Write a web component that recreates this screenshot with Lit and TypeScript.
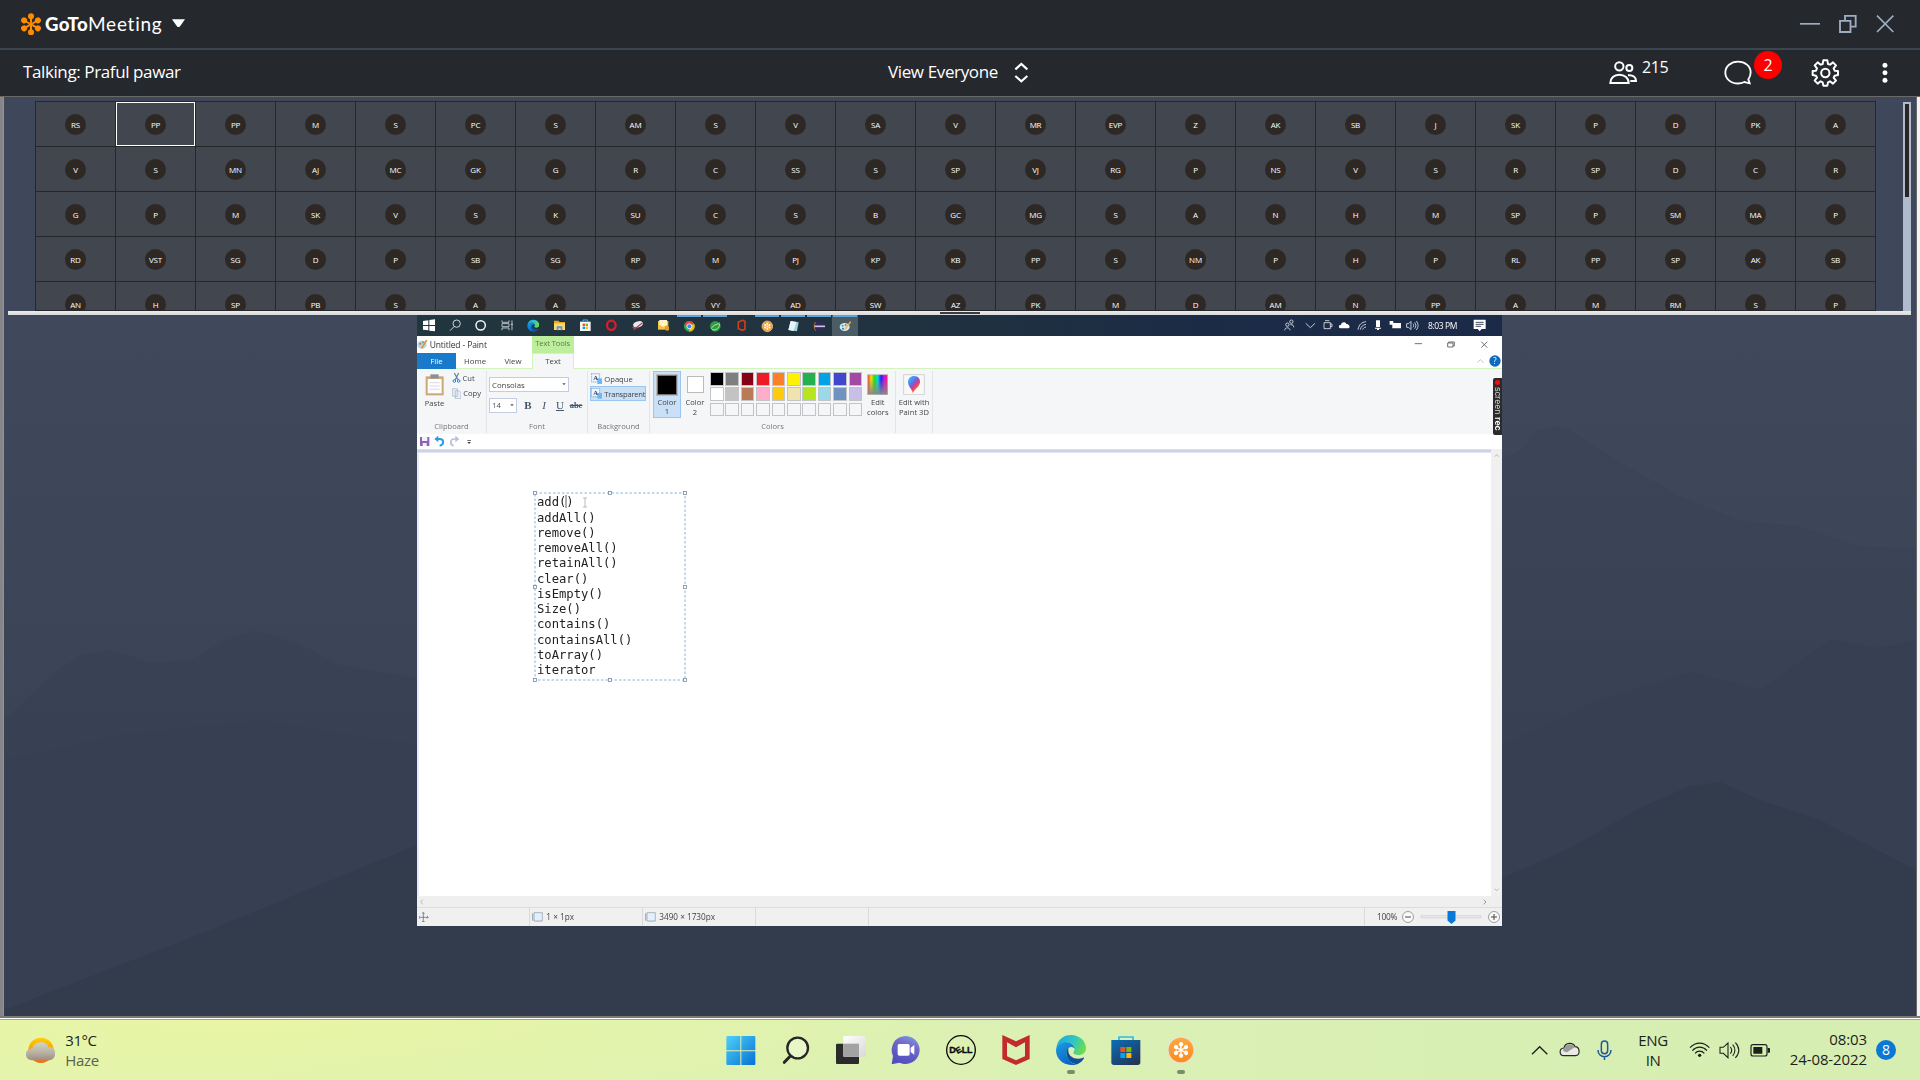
import { LitElement, html, svg, css } from 'lit';
import { customElement } from 'lit/decorators.js';

const ROWS = [
  'RS PP PP M S PC S AM S V SA V MR EVP Z AK SB J SK P D PK A',
  'V S MN AJ MC GK G R C SS S SP VJ RG P NS V S R SP D C R',
  'G P M SK V S K SU C S B GC MG S A N H M SP P SM MA P',
  'RD VST SG D P SB SG RP M PJ KP KB PP S NM P H P RL PP SP AK SB',
  'AN H SP PB S A A SS VY AD SW AZ PK M D AM N PP A M RM S P',
].map((r) => r.split(' '));

const LINES = ['add()', 'addAll()', 'remove()', 'removeAll()', 'retainAll()', 'clear()', 'isEmpty()', 'Size()', 'contains()', 'containsAll()', 'toArray()', 'iterator'];

const PALETTE = [
  '#000', '#7f7f7f', '#880015', '#ed1c24', '#ff7f27', '#fff200', '#22b14c', '#00a2e8', '#3f48cc', '#a349a4',
  '#fff', '#c3c3c3', '#b97a57', '#ffaec9', '#ffc90e', '#efe4b0', '#b5e61d', '#99d9ea', '#7092be', '#c8bfe7',
  ...Array(10).fill('#f5f6f7'),
];

// Every icon is authored on a grid of three units per pixel.
const ic = (x: number, y: number, w: number, h: number, body: unknown) =>
  html`<svg width=${w / 3} height=${h / 3} viewBox="${x} ${y} ${w} ${h}" fill="none">${body}</svg>`;

const star = (cx: number, cy: number, s: number, color: string) => svg`
  <g transform="translate(${cx} ${cy}) scale(${s})" fill=${color} stroke=${color}>
    ${[0, 60, 120, 180, 240, 300].map((a) => svg`<g transform="rotate(${a})"><path d="M0 -5V-20" stroke-width="6"/><circle cy="-24" r="9" stroke="none"/></g>`)}
    <circle r="6" stroke="none"/></g>`;

const edge = (id: string) => svg`
  <defs>
    <linearGradient id="${id}a" x1="0" y1=".2" x2="1" y2=".5"><stop offset="0" stop-color="#1fa7dd"/><stop offset=".55" stop-color="#2fc4c6"/><stop offset="1" stop-color="#6ade4b"/></linearGradient>
    <linearGradient id="${id}b" x1="0" y1="0" x2=".6" y2="1"><stop offset="0" stop-color="#1b9de2"/><stop offset="1" stop-color="#0a62c4"/></linearGradient>
  </defs>
  <path fill="url(#${id}a)" d="M1 40C4 14 22 0 45 0c27 0 45 20 45 39 0 14-10 21-22 21-11 0-16-4-16-7s4-5 4-11c0-11-10-19-22-19C16 23 4 32 1 40z"/>
  <path fill="url(#${id}b)" d="M0 46C1 31 15 22 31 22c14 0 24 9 25 20-3-5-8-6-12-6-8 2-14 11-13 22 2 16 16 30 32 31-6 2-12 2-18 1C20 90 0 70 0 46z"/>
  <path fill="#124f9a" d="M37 39c-5 5-7 11-6 19 2 17 17 30 33 30 9-4 16-11 20-18 1-2-1-3-3-2-19 8-44-1-44-21 0-3 0-5 0-8z"/>`;

@customElement('app-root')
export class AppRoot extends LitElement {
  static styles = css`
    :host { display: block; width: 1920px; height: 1080px; overflow: hidden; font-family: 'Open Sans', 'Noto Sans', sans-serif; }
    * { box-sizing: border-box; }
    svg { display: block; flex: none; }
    .page { width: 1920px; height: 1080px; display: flex; flex-direction: column; background: #24282d; }
    .titlebar { height: 48px; display: flex; align-items: center; padding: 0 26px 0 20px; color: #fff; background: #25282d; flex: none; }
    .brand { font: 900 18px/24px Lato, sans-serif; margin-left: 3px; width: 121px; white-space: nowrap; display: flex; align-items: baseline; }
    .brand .bold { width: 43px; font-size: 18.6px; letter-spacing: .35px; }
    .brand .thin { font-weight: 400; font-size: 19px; letter-spacing: .75px; }
    .caret { margin-left: 6px; }
    .winbtns { margin-left: auto; display: flex; gap: 19px; align-items: center; }
    .toolbar { height: 49px; flex: none; border-top: 2px solid #3d4550; border-bottom: 1px solid #6b6966; background: #25282d; color: #fff; display: grid; grid-template-columns: 865px 721px 1fr; padding-left: 23px; align-items: center; font-size: 17px; }
    .talk { letter-spacing: -.39px; margin-top: -3px; }
    .view { display: flex; align-items: center; gap: 16px; letter-spacing: -.37px; }
    .view span { margin-top: -2px; }
    .acts { display: flex; align-items: center; }
    .count { font-size: 16px; margin: -13px 0 0 4px; width: 30px; letter-spacing: -.4px; }
    .chat { margin-left: 52px; }
    .badge { width: 28px; height: 28px; border-radius: 50%; background: #f00; display: grid; place-items: center; margin: -17px 0 0 2px; font-size: 16px; line-height: 26px; }
    .gear { margin-left: 29px; }
    .dots { margin-left: 42px; }
    .body { flex: 1; min-height: 0; display: flex; border-left: 3px solid #85858a; border-right: 3px solid #f2f2f2; }
    .inner { flex: 1; min-width: 0; border-left: 1px solid #8f949f; border-right: 1px solid #66686c; display: flex; flex-direction: column; background: #40485c; }
    .people { height: 214px; flex: none; display: flex; justify-content: space-between; padding: 4px 5px 0 31px; background: #3f485b; }
    .grid { width: 1841px; height: 210px; overflow: hidden; display: grid; grid-template-columns: repeat(23, 80px); grid-auto-rows: 45px; border-left: 1px solid #25282a; border-top: 1px solid #25282a; border-bottom: 1px solid #25282a; }
    .cell { background: #42464f; border-right: 1px solid #25282a; border-bottom: 1px solid #25282a; display: grid; place-items: center; }
    .cell.on { box-shadow: inset 0 0 0 1px #fff; }
    .av { width: 21px; height: 21px; border-radius: 50%; background: #2e2825; color: #fff; font-size: 8px; line-height: 22px; text-align: center; white-space: nowrap; margin-top: 1px; letter-spacing: -.2px; }
    .scroll { width: 8px; margin-top: 1px; background: #afbbcc; padding: 2px; }
    .thumb { height: 93px; background: #2b2526; }
    .split { height: 4px; flex: none; margin: 0 5px 0 4px; background: linear-gradient(#efebec, #d6d9db); display: flex; justify-content: center; padding-top: 1px; }
    .grip { width: 40px; height: 2px; background: #3c3c3e; }
    .stage { flex: 1; min-height: 0; display: grid; overflow: hidden; }
    .stage > * { grid-area: 1 / 1; }
    .share { width: 1085px; height: 611px; margin-left: 413px; overflow: hidden; position: relative; }
    .win { width: 1085px; height: 611px; background: #fff; display: flex; flex-direction: column; color: #444; font-size: 7.6px; line-height: 10px; filter: blur(.3px); white-space: nowrap; }
    .wtask { height: 21px; flex: none; background: linear-gradient(90deg, #22363f, #20323f 45%, #1c2b46 75%, #1b2a48); display: flex; justify-content: space-between; }
    .apps { display: flex; margin-left: -1px; }
    .app { width: 26px; height: 21px; display: grid; place-items: center; }
    .app.run { border-top: 2px solid #5da6dc; padding: 0; background-clip: padding-box; border-image: linear-gradient(90deg, transparent 3px, #5da6dc 3px, #5da6dc 23px, transparent 23px) 2; }
    .app.act { background: #4c5c66; }
    .wtray { display: flex; align-items: center; color: #fff; width: 223px; }
    .wclock { width: 30px; margin: 0 15px 0 9px; font-size: 8.5px; letter-spacing: -.38px; }
    .wtitle { height: 17px; flex: none; display: flex; align-items: center; }
    .name { width: 102px; font-size: 8.5px; margin-left: 2px; color: #333; letter-spacing: -.12px; }
    .tools { width: 42px; height: 17px; background: #bdee9c; color: #5f7a50; text-align: center; line-height: 15px; letter-spacing: -.1px; }
    .wctl { margin-left: auto; margin-right: 13px; }
    .tabs { height: 16px; flex: none; display: flex; border-bottom: 1.5px solid #d3f5bd; text-align: center; line-height: 16px; font-size: 7.8px; }
    .file { width: 39px; height: 16px; background: #1979ca; color: #fff; }
    .tab { width: 38px; }
    .tab.cur { width: 42px; height: 16px; background: #f5f6f7; border: 1px solid #d3f5bd; border-bottom: 0; line-height: 14px; }
    .help { margin: 2px 1px 0 auto; }
    .ribbon { height: 65px; flex: none; background: #f5f6f7; display: flex; }
    .grp { display: flex; flex-direction: column; border-right: 1px solid #e4e5e8; height: 62px; margin-top: 2px; flex: none; }
    .grow { display: flex; height: 50px; }
    .lab { text-align: center; color: #777; line-height: 11px; }
    .col { display: flex; flex-direction: column; }
    .big { align-items: center; text-align: center; line-height: 9.6px; padding-top: 3px; }
    .big .cap { margin-top: 3px; }
    .item { display: flex; align-items: center; height: 15px; gap: 2px; }
    .small { margin: -.5px 0 0 -.5px; }
    .clip { width: 70px; }
    .paste { width: 35px; }
    .font { width: 101px; }
    .fontcol { height: 50px; }
    .bg { width: 62px; }
    .cols { width: 246px; }
    .edit { margin-left: 2px; }
    .p3d { width: 37px; }
    .sel { border: 1px solid #c4cde0; background: #fff; display: flex; justify-content: space-between; align-items: center; padding: 0 2px; height: 15px; font-family: 'Open Sans', sans-serif; font-size: 7.8px; }
    .fam { width: 80px; margin: 6px 0 6px 2px; }
    .size { width: 28px; }
    .style { display: flex; margin-left: 2px; align-items: center; font: 11px/15px 'Liberation Serif', serif; color: #44546a; }
    .style span { width: 16px; text-align: center; }
    .b { font-weight: 700; margin-left: 3px; }
    .i { font-style: italic; }
    .u { text-decoration: underline; }
    .s { font-size: 8.5px; text-decoration: line-through; font-weight: 700; }
    .tr { background: #c9e0f7; border: 1px solid #98c6f0; width: 56px; height: 15px; padding-left: 0; margin-left: -2px; letter-spacing: -.22px; }
    .bgs { padding: 1px 0 0 4px; }
    .opq { height: 14px; margin-left: -1px; }
    .c1 { width: 28px; height: 47px; background: #c9e0f7; border: 1px solid #98c6f0; margin-left: 3px; }
    .c2 { width: 28px; height: 47px; padding-top: 4px; }
    .sw { width: 20px; height: 20px; background: #000; border: 1px solid #777; box-shadow: 0 0 0 1px #bbb; }
    .c2 .sw { width: 17px; height: 17px; background: #fff; border-color: #bbb; margin: 1px 0 2px; box-shadow: none; }
    .pal { display: grid; grid-template-columns: repeat(10, 13.6px); grid-auto-rows: 13.6px; gap: 1.8px; margin: 1px 3px 0 1px; }
    .chip { border: 1px solid #c2c4c8; }
    .qat { height: 15px; flex: none; padding: 1.5px 0 0 2px; }
    .ruler { height: 4px; flex: none; background: linear-gradient(#dfe5f0, #c9d3e6 40%, #c9d3e6 60%, #e9edf5); margin-right: 11px; }
    .work { flex: 1; display: flex; min-height: 0; }
    .canvas { flex: 1; border-left: 2px solid #e6ebf7; padding: 40px 0 0 117px; }
    .tbox { width: 150px; height: 187px; position: relative; font: 12.2px/15.27px 'DejaVu Sans Mono', monospace; color: #222; padding: 2.3px 0 0 1px; }
    .ln { height: 15.27px; display: flex; }
    .frame { position: absolute; left: -3px; top: -2px; }
    .vs { width: 11px; background: #f0f0f0; display: flex; flex-direction: column; justify-content: space-between; margin-top: -4px; }
    .hs { height: 11px; flex: none; background: #efefef; display: flex; justify-content: space-between; padding: 0 14px 0 2px; align-items: center; }
    .status { height: 19px; flex: none; background: #f0f0f0; border-top: 1px solid #dcdcdc; display: flex; color: #444; }
    .st { width: 113px; border-right: 1px solid #dadada; display: flex; align-items: center; gap: 3px; padding-left: 2px; font-size: 8.2px; flex: none; }
    .st.wide { width: 496px; }
    .zoom { display: flex; align-items: center; padding-left: 12px; font-size: 8.4px; letter-spacing: -.3px; gap: .5px; }
    .rec { position: absolute; right: 0; top: 63px; width: 9px; height: 57px; background: #2b2b2b; border-radius: 2px 0 0 2px; color: #ddd; writing-mode: vertical-rl; font-family: 'Liberation Sans', sans-serif; font-size: 9px; letter-spacing: .05px; line-height: 9px; display: flex; align-items: center; white-space: nowrap; filter: blur(.3px); }
    .dot { width: 5px; height: 5px; background: #f01010; border-radius: 50%; margin: 2px 0 2px; }
    .rec b { color: #fff; }
    .base { height: 4px; flex: none; background: linear-gradient(#7d7a76 0 2px, #fff 2px 3px, #a3a3a3 3px); }
    .taskbar { height: 60px; flex: none; display: flex; color: #1c1f1c; font-size: 15px; line-height: 20px; background: radial-gradient(ellipse 700px 90px at 240px 0, #e8f5a5, transparent), linear-gradient(90deg, #e3f4ae, #dff2b0 30%, #daf0b4 60%, #d6eeb2); }
    .weather { width: 713px; display: flex; padding: 10px 0 0 26px; gap: 10px; letter-spacing: -.45px; }
    .weather .sun { margin-top: 7px; }
    .haze { color: #5a6350; letter-spacing: -.3px; }
    .dock { display: flex; width: 812px; }
    .tile { width: 55px; height: 60px; display: flex; flex-direction: column; align-items: center; padding-top: 15px; }
    .pill { width: 8px; height: 4px; border-radius: 2px; background: #7d8b68; margin-top: 5px; }
    .tray { display: flex; align-items: center; }
    .ico { width: 30px; display: grid; place-items: center; }
    .mic { width: 40px; }
    .lang { width: 60px; text-align: center; letter-spacing: -.4px; padding-right: 4px; margin-top: -1px; }
    .when { width: 92px; text-align: right; letter-spacing: -.1px; margin-top: -2px; }
    .note { width: 20px; height: 20px; border-radius: 50%; background: #0a78d4; color: #fff; text-align: center; font-size: 14px; margin-left: 9px; }
  `;

  private header() {
    return html`
      <header class="titlebar">
        ${ic(57, 38, 66, 68, star(90, 72, 1, '#ff8c00'))}
        <div class="brand"><span class="bold">GoTo</span><span class="thin">Meeting</span></div>
        <div class="caret">${ic(514, 62, 40, 28, svg`<path d="M514 63H553L541 80L536 86H531L526 80Z" fill="#fff"/>`)}</div>
        <div class="winbtns">
          ${ic(900, 42, 60, 58, svg`<path d="M900 71.500H960" stroke="#9fadc2" stroke-width="5"/>`)}
          ${ic(1016, 42, 54, 58, svg`<path d="M1034 62V47.500H1066V80H1053M1019 62.500H1050.500V96H1019Z" stroke="#9fadc2" stroke-width="5.500"/>`)}
          ${ic(1128, 42, 54, 58, svg`<path d="M1131 47L1180 96M1180 47L1131 96" stroke="#9fadc2" stroke-width="5"/>`)}
        </div>
      </header>
      <div class="toolbar">
        <div class="talk">Talking: Praful pawar</div>
        <div class="view"><span>View Everyone</span> ${ic(522, 186, 44, 64, svg`<path d="M526 208L544 192L562 208M526 228L544 244L562 228" stroke="#fff" stroke-width="6.500"/>`)}</div>
        <div class="acts">
          ${ic(329, 182, 87, 76, svg`<g stroke="#fff" stroke-width="6"><circle cx="360" cy="201" r="12.500"/><circle cx="390" cy="206" r="9"/><path d="M333 251C333 236 344 226 360 226S388 236 388 251Z"/><path d="M386 228C401 226 410 234 410 245H393"/></g>`)}
          <div class="count">215</div>
          <div class="chat">${ic(670, 180, 84, 76, svg`<path d="M712 185C733 185 750 198 750 217C750 227 747 233 743 238L747 250L731 246C725 249 719 250.500 712 250.500C690 250.500 674 236 674 218C674 199 691 185 712 185Z" stroke="#fff" stroke-width="5.500"/>`)}</div>
          <div class="badge">2</div>
          <div class="gear">${ic(932, 176, 86, 84, svg`<circle cx="975" cy="218" r="12.500" stroke="#fff" stroke-width="6"/><g transform="translate(975 218)"><path stroke="#fff" stroke-width="6" stroke-linejoin="round" d="M-6 -38H6L8 -27L14 -25L23 -32L32 -23L25 -14L28 -7L38 -6V6L28 8L25 14L32 23L23 32L14 25L8 28L6 38H-6L-8 28L-14 25L-23 32L-32 23L-25 14L-28 8L-38 6V-6L-28 -7L-25 -14L-32 -23L-23 -32L-14 -25L-8 -27Z"/></g>`)}</div>
          <div class="dots">${ic(1146, 186, 18, 64, svg`<g fill="#fff"><circle cx="1155" cy="195.500" r="7.500"/><circle cx="1155" cy="218" r="7.500"/><circle cx="1155" cy="240.500" r="7.500"/></g>`)}</div>
        </div>
      </div>`;
  }

  private backdrop() {
    return html`<svg width="1912" height="701" viewBox="4 315 1912 701">
      <defs>
        <linearGradient id="sky" x2="0" y2="1"><stop offset="0" stop-color="#40485c"/><stop offset="1" stop-color="#3a4356"/></linearGradient>
        <linearGradient id="m1" x2="0" y2="1"><stop offset="0" stop-color="#3f495b"/><stop offset="1" stop-color="#364051"/></linearGradient>
        <linearGradient id="m2" x2="0" y2="1"><stop offset="0" stop-color="#3c4557"/><stop offset="1" stop-color="#343e4f"/></linearGradient>
      </defs>
      <path fill="url(#sky)" d="M4 315H1916V1016H4z"/>
      <path fill="url(#m1)" d="M4 375C140 350 280 345 417 325L960 340L1502 332L1640 340L1760 356L1916 376V1016H4Z"/>
      <path fill="url(#m2)" d="M4 720L55 672L80 655L110 650L150 662L190 660L225 640L255 630L300 644L340 665L380 672L417 678L960 600L1502 457C1520 454 1526 445 1532 434C1545 424 1565 424 1580 436L1620 462L1680 496L1740 520L1800 526L1860 546L1916 548V1016H4Z"/>
      <path fill="#364052" d="M4 760L120 735L260 720L417 745L1502 745L1600 700L1690 672L1760 690L1830 640L1880 648L1916 640V1016H4Z"/>
      <path fill="#333c4c" d="M4 1010L200 934L417 845L1000 800L1502 878L1570 848L1640 808L1690 786L1720 782L1760 800L1820 820L1916 870V1016H4Z"/>
    </svg>`;
  }

  private desktopBar() {
    const apps: [unknown, string][] = [
      [svg`<path fill="#fff" d="M38 34L54 32V46H38ZM57 31L75 29V46H57ZM38 49H54V62L38 60ZM57 49H75V65L57 63Z"/>`, ''],
      [svg`<circle cx="61" cy="42" r="11" stroke="#cfd6da" stroke-width="3"/><path d="M53 51L41 63" stroke="#cfd6da" stroke-width="3"/>`, ''],
      [svg`<circle cx="55" cy="47" r="14" stroke="#f4f4f4" stroke-width="4.500"/>`, ''],
      [svg`<path d="M41 32V38H62V32M41 62V55H62V62M41 42H62V51H41ZM71 32V62M67 44H75" stroke="#cfd6da" stroke-width="2.500"/>`, ''],
      [svg`<g transform="translate(39 30) scale(.4)">${edge('w')}</g>`, ''],
      [svg`<path fill="#e9a920" d="M41 33H54L58 37H74V61H41Z"/><path fill="#ffd766" d="M41 41H74V61H41Z"/><path fill="#4a9fe0" d="M49 50H66V62H61V56H54V62H49Z"/>`, ''],
      [svg`<path fill="#f5f5f5" d="M41 36H73V64H41Z"/><path d="M50 36V31H64V36" stroke="#41b4e6" stroke-width="3"/><path fill="#f25022" d="M49 42H56V49H49Z"/><path fill="#7fba00" d="M58 42H65V49H58Z"/><path fill="#00a4ef" d="M49 51H56V58H49Z"/><path fill="#ffb900" d="M58 51H65V58H58Z"/>`, ''],
      [svg`<ellipse cx="57" cy="47" rx="13" ry="14" stroke="#e3192a" stroke-width="7"/>`, ''],
      [svg`<ellipse cx="59" cy="44" rx="15" ry="9" fill="#e8e8ee" transform="rotate(-18 59 44)"/><path d="M42 54H60M46 60L72 40" stroke="#c33d4a" stroke-width="4"/>`, ''],
      [svg`<path fill="#f5c342" d="M41 34H72V60H41Z"/><path fill="#fff3c4" d="M45 31H68V45L57 52L45 45Z"/><circle cx="68" cy="56" r="7" fill="#e5a018"/>`, ''],
      [svg`<circle cx="57" cy="47" r="16" fill="#34a853"/><path fill="#ea4335" d="M57 47L43 39A16 16 0 0 1 71 39Z"/><path fill="#fbbc05" d="M57 47L71 39A16 16 0 0 1 57 63Z"/><circle cx="57" cy="47" r="7.500" fill="#4285f4" stroke="#fff" stroke-width="2.500"/>`, 'run'],
      [svg`<circle cx="57" cy="47" r="16" fill="#2f9a45"/><path d="M45 54C52 40 60 44 70 37M47 57C60 60 69 52 70 40" stroke="#b9e79a" stroke-width="3"/>`, 'run'],
      [svg`<path d="M61 32L48 37V57L61 62L68 59V35Z" stroke="#d83b1c" stroke-width="5"/>`, ''],
      [svg`<circle cx="57" cy="47" r="16" fill="#f2a03d" stroke="#f8cf99" stroke-width="2"/>${star(57, 47, 0.32, '#fff')}`, 'run'],
      [svg`<path fill="#9fd4dd" d="M49 31L73 35L68 62L42 58Z"/><path fill="#e8f6f8" d="M49 31L66 34L58 61L42 58Z"/>`, 'run'],
      [svg`<circle cx="58" cy="47" r="15" fill="#33285c"/><path d="M42 47H74" stroke="#c9c7dc" stroke-width="5"/><path d="M46 34C40 42 40 53 46 60" stroke="#e58a2e" stroke-width="2"/>`, 'run'],
      [svg`<ellipse cx="55" cy="49" rx="15" ry="12" fill="#d7e7ee"/><circle cx="49" cy="45" r="3" fill="#3b8"/><circle cx="58" cy="43" r="3" fill="#d54"/><circle cx="50" cy="54" r="3" fill="#37c"/><path d="M56 56L73 33" stroke="#f0b44a" stroke-width="4"/>`, 'run act'],
    ];
    return html`<div class="wtask">
      <div class="apps">${apps.map(([g, c]) => html`<div class="app ${c}">${ic(38, 28, 38, 38, g)}</div>`)}</div>
      <div class="wtray">
        ${ic(58, 28, 420, 38, svg`<g stroke="#e4e8ee" stroke-width="2.500">
          <circle cx="83" cy="45" r="5"/><circle cx="95" cy="36" r="5"/><path d="M75 62C75 52 91 52 91 62M92 45C99 43 102 48 102 53"/>
          <path d="M138 41L152 54L166 41"/><path d="M193 39H212V57H193ZM212 43H217V51H212M196 33H209"/>
          <path d="M295 60C298 44 306 38 319 36M302 60C304 50 310 46 319 44M309 60C311 55 314 53 319 52"/>
          <path d="M441 42H447L454 35V60L447 53H441ZM460 42C463 45 463 50 460 53M465 38C470 44 470 52 465 57M470 34C477 42 477 53 470 61"/></g>
          <path fill="#fff" d="M244 56C235 56 236 45 244 45C246 36 258 36 260 43C270 42 274 56 264 56ZM349 32H361V52H349ZM346 54H364V57H358V61H352V57H346ZM398 40H424V56H398ZM390 34H401V45H390Z"/>`)}
        <div class="wclock">8:03 PM</div>
        ${ic(638, 28, 40, 38, svg`<path fill="#fff" d="M640 30H676V58H664L658 65L652 58H640Z"/><path d="M646 38H670M646 44H670M646 50H662" stroke="#1b2a48" stroke-width="2.500"/>`)}
      </div></div>`;
  }

  private ribbon() {
    const letterA = (x: number, y: number) => svg`<rect x=${x} y=${y} width="25" height="25" fill="#eef4fb" stroke="#4a8fd0" stroke-width="2" stroke-dasharray="4 2"/><rect x=${x + 18} y=${y + 14} width="15" height="17" fill="#6bb8f2"/><text x=${x + 6} y=${y + 20} font-family="Liberation Serif" font-size="20" font-weight="700" fill="#2c3e66">A</text>`;
    const arrow = () => ic(0, 0, 12, 8, svg`<path d="M1 1H11L6 7Z" fill="#555"/>`);
    return html`<div class="ribbon">
      <div class="grp clip"><div class="grow">
        <div class="col big paste">${ic(46, 190, 58, 66, svg`<path fill="#caa877" d="M48 197H102V254H48Z"/><path fill="#fdfdfd" d="M54 205H96V248H54Z"/><path fill="#8a8f98" d="M62 191H87V203H62Z"/><path d="M60 216H90M60 226H90M60 236H90" stroke="#ccd" stroke-width="2"/>`)}<div class="cap">Paste</div></div>
        <div class="col small"><div class="item">${ic(126, 190, 27, 34, svg`<path d="M133 193L145 215M146 193L135 215" stroke="#5d7f9f" stroke-width="3.500"/><circle cx="133" cy="217" r="4" stroke="#2f86d1" stroke-width="3"/><circle cx="146" cy="217" r="4" stroke="#2f86d1" stroke-width="3"/>`)}Cut</div>
          <div class="item">${ic(124, 235, 29, 33, svg`<path fill="#e9eef6" stroke="#9fb0c6" stroke-width="2" d="M126 237H140V260H126ZM134 243H145L151 249V267H134Z"/>`)}Copy</div></div>
      </div><div class="lab">Clipboard</div></div>
      <div class="grp font"><div class="col fontcol"><div class="sel fam">Consolas ${arrow()}</div>
        <div class="style"><div class="size"><div class="sel">14 ${arrow()}</div></div><span class="b">B</span><span class="i">I</span><span class="u">U</span><span class="s">abc</span></div></div>
        <div class="lab">Font</div></div>
      <div class="grp bg"><div class="grow"><div class="col bgs"><div class="item opq">${ic(546, 188, 34, 34, letterA(547, 190))}Opaque</div><div class="item tr">${ic(546, 236, 34, 34, letterA(547, 237))}Transparent</div></div></div><div class="lab">Background</div></div>
      <div class="grp cols"><div class="grow">
        <div class="col big c1"><div class="sw"></div><div class="cap">Color<br>1</div></div>
        <div class="col big c2"><div class="sw"></div><div class="cap">Color<br>2</div></div>
        <div class="pal">${PALETTE.map((c) => html`<div class="chip" style="background:${c}"></div>`)}</div>
        <div class="col big edit">${ic(591, 192, 64, 63, svg`<defs><linearGradient id="hue"><stop stop-color="#e33"/><stop offset=".17" stop-color="#fd0"/><stop offset=".34" stop-color="#2d2"/><stop offset=".5" stop-color="#0dd"/><stop offset=".67" stop-color="#22e"/><stop offset=".85" stop-color="#d1d"/><stop offset="1" stop-color="#e24"/></linearGradient><linearGradient id="fade" x2="0" y2="1"><stop offset=".2" stop-color="#888" stop-opacity="0"/><stop offset="1" stop-color="#888"/></linearGradient></defs><path fill="url(#hue)" d="M593 194H653V254H593Z"/><path fill="url(#fade)" stroke="#bbb" stroke-width="2" d="M593 194H653V254H593Z"/>`)}<div class="cap">Edit<br>colors</div></div>
      </div><div class="lab">Colors</div></div>
      <div class="grp p3d"><div class="col big">${ic(699, 192, 66, 63, svg`<defs><linearGradient id="pin" x1=".1" y1=".1" x2=".8" y2="1"><stop stop-color="#30c0f0"/><stop offset=".4" stop-color="#6a62e8"/><stop offset=".6" stop-color="#e63b6c"/><stop offset="1" stop-color="#ffb02e"/></linearGradient></defs><path fill="#f8f8f8" stroke="#c9c9c9" stroke-width="2.500" d="M701 194H763V254H701Z"/><path fill="url(#pin)" d="M732 198C745 198 751 207 750 217C749 230 738 234 728 249C728 238 714 231 714 216C714 206 721 198 732 198Z"/>`)}<div class="cap">Edit with<br>Paint 3D</div></div></div>
    </div>`;
  }

  private paint() {
    const pts = [[2, 2], [77, 2], [152, 2], [2, 96], [152, 96], [2, 189], [77, 189], [152, 189]];
    const page = (x: number) => ic(x, 94, 34, 32, svg`<path d="M${x + 6} 96H${x + 31}V121H${x + 6}Z" fill="#e3effa" stroke="#8a97a8" stroke-width="2"/><path d="M${x + 2} 98V120M${x + 9} 125H${x + 30}" stroke="#6b7b90" stroke-width="2"/>`);
    return html`<div class="share"><div class="win">
      ${this.desktopBar()}
      <div class="wtitle">${ic(20, 88, 32, 32, svg`<ellipse cx="35" cy="105" rx="14" ry="12" fill="#b9d5e6"/><circle cx="30" cy="102" r="3" fill="#d54"/><circle cx="38" cy="98" r="3" fill="#3b8"/><path d="M34 116L49 91" stroke="#d99a3c" stroke-width="5"/>`)}
        <div class="name">Untitled - Paint</div><div class="tools">Text Tools</div>
        <div class="wctl">${ic(462, 90, 225, 28, svg`<path d="M464 101H486M563 99H579V111H563ZM566 99V96H583V108H579M664 95L682 113M682 95L664 113" stroke="#555" stroke-width="2.500"/>`)}</div></div>
      <div class="tabs"><div class="file">File</div><div class="tab">Home</div><div class="tab">View</div><div class="tab cur">Text</div>
        <div class="help">${ic(648, 135, 76, 36, svg`<path d="M652 158L661 149L671 158" stroke="#bbb" stroke-width="2.500"/><circle cx="705" cy="153" r="17" fill="#0f6cbd"/><text x="699" y="162" font-family="Open Sans" font-size="25" fill="#fff">?</text>`)}</div></div>
      ${this.ribbon()}
      <div class="qat">${ic(28, 378, 165, 34, svg`<path fill="#8a63b8" d="M31 381H59V408H31Z"/><path fill="#f4f0fa" d="M37 381H53V393H37ZM39 399H51V408H39Z"/><path d="M78 387H90C104 387 104 405 90 407" stroke="#2f9be0" stroke-width="6"/><path fill="#2f9be0" d="M86 377V397L74 387Z"/><path d="M144 387H134C120 387 120 405 132 407" stroke="#b7c3d4" stroke-width="5"/><path fill="#b7c3d4" d="M137 377V397L149 387Z"/><path fill="#444" d="M173 391H184V393H173ZM173 396H184L178.500 402Z"/>`)}</div>
      <div class="ruler"></div>
      <div class="work">
        <div class="canvas"><div class="tbox">
          ${LINES.map((l) => html`<div class="ln">${l}</div>`)}
          <svg class="frame" width="156" height="192" viewBox="0 0 156 192" fill="none"><path d="M2 2H152V189H2Z" stroke="#7fb5e2" stroke-dasharray="2.500 2"/>${pts.map(([x, y]) => svg`<rect x=${x - 1.5} y=${y - 1.5} width="3" height="3" fill="#fff" stroke="#7a8ba3" stroke-width=".8"/>`)}
            <path d="M33 4V17" stroke="#333" stroke-width=".8"/><path d="M50 7H54M52 7V16M50 16H54" stroke="#aaa" stroke-width=".8"/></svg>
        </div></div>
        <div class="vs">${ic(0, 0, 33, 36, svg`<path d="M11 23L17 17L23 23" stroke="#aaa" stroke-width="2.500"/>`)}${ic(0, 0, 33, 36, svg`<path d="M11 14L17 20L23 14" stroke="#aaa" stroke-width="2.500"/>`)}</div>
      </div>
      <div class="hs">${ic(0, 0, 18, 24, svg`<path d="M12 5L5 12L12 19" stroke="#aaa" stroke-width="2.500"/>`)}${ic(0, 0, 18, 24, svg`<path d="M5 5L12 12L5 19" stroke="#999" stroke-width="3"/>`)}</div>
      <div class="status">
        <div class="st">${ic(26, 94, 32, 32, svg`<path d="M39 96V124M25 110H53M35 99L39 95L43 99M35 121L39 125L43 121M28 106L24 110L28 114M50 106L54 110L50 114" stroke="#4a5a80" stroke-width="2"/>`)}</div>
        <div class="st">${page(365)}1 × 1px</div><div class="st">${page(704)}3490 × 1730px</div><div class="st"></div><div class="st wide"></div>
        <div class="zoom">100% <svg width="104" height="16" viewBox="0 0 104 16" fill="none"><g stroke="#888" stroke-width=".8"><circle cx="10" cy="8" r="5.500" fill="#fafafa"/><circle cx="96" cy="8" r="5.500" fill="#fafafa"/></g><path d="M7 8H13M93 8H99M96 5V11" stroke="#444"/><path d="M23 6.500H83V9H23Z" fill="#e3e6e6" stroke="#d0d2d2" stroke-width=".6"/><path d="M49.500 2H57.500V11.500L53.500 15L49.500 11.500Z" fill="#0a78d7"/></svg></div>
      </div>
    </div><div class="rec"><div class="dot"></div><span>screen <b>rec</b></span></div></div>`;
  }

  private taskbar() {
    const tile = (cx: number, body: unknown, on = false) => html`<div class="tile">${ic(cx - 45, 75, 90, 90, body)}${on ? html`<div class="pill"></div>` : ''}</div>`;
    return html`<footer class="taskbar">
      <div class="weather"><div class="sun">${ic(78, 710, 88, 80, svg`<defs><linearGradient id="sun" x2="0" y2="1"><stop stop-color="#ffd000"/><stop offset=".5" stop-color="#ff9d00"/><stop offset="1" stop-color="#f26a12"/></linearGradient><linearGradient id="cl" x2="0" y2="1"><stop stop-color="#cdd6cf"/><stop offset=".6" stop-color="#b3b0a8"/><stop offset="1" stop-color="#9c8c84"/></linearGradient></defs><circle cx="123" cy="750" r="38" fill="url(#sun)"/><path fill="url(#cl)" d="M96 780C71 780 72 742 97 745C100 720 143 720 146 742C170 732 174 780 148 780Z" opacity=".96"/>`)}</div>
        <div>31°C<div class="haze">Haze</div></div></div>
      <div class="dock">
        ${tile(122, svg`<defs><linearGradient id="wn" gradientUnits="userSpaceOnUse" x1="78" y1="78" x2="165" y2="165"><stop stop-color="#4fd0fa"/><stop offset="1" stop-color="#0672d3"/></linearGradient></defs><path fill="url(#wn)" d="M78 80L80 78H120V121H78ZM123 78H163L165 80V121H123ZM78 124H120V165H80L78 163ZM123 124H165V163L163 165H123Z"/>`)}
        ${tile(288, svg`<circle cx="293" cy="114" r="31" stroke="#262626" stroke-width="7" fill="#fff" fill-opacity=".3"/><path d="M271 138L253 157" stroke="#262626" stroke-width="9" stroke-linecap="round"/>`)}
        ${tile(453, svg`<defs><linearGradient id="tv" x2="1" y2="1"><stop stop-color="#fff"/><stop offset="1" stop-color="#d8d8d8"/></linearGradient></defs><rect x="408" y="101" width="69" height="61" rx="3" fill="#2b2b2b"/><rect x="430" y="78" width="67" height="62" rx="3" fill="url(#tv)"/><path fill="#a3a3a3" d="M430 101H477V140H430Z"/>`)}
        ${tile(616, svg`<defs><linearGradient id="tm" x1=".9" x2=".5" y2="1"><stop stop-color="#7aa0e8"/><stop offset=".4" stop-color="#7468c8"/><stop offset="1" stop-color="#4f50c0"/></linearGradient></defs><path fill="url(#tm)" d="M616 78A42 42 0 1 1 597 158L576 162C572 162 573 159 574 157L577 138A42 42 0 0 1 616 78Z"/><rect x="591" y="102" width="36" height="35" rx="5" fill="#fff"/><path fill="#fff" d="M630 113L641 105V134L630 126Z"/>`)}
        ${tile(783, svg`<circle cx="783" cy="120" r="43" stroke="#0a0a0a" stroke-width="4"/><g font-family="Liberation Sans" font-weight="700" font-size="27" fill="#0a0a0a" stroke="#0a0a0a"><text x="748" y="130">D</text><text x="767" y="129" transform="rotate(-30 776 120)" font-size="25">E</text><text x="785" y="130">L</text><text x="801" y="130">L</text></g>`)}
        ${tile(947, svg`<path fill="#c22a2c" fill-rule="evenodd" d="M906 75L947 94L988 75V147L947 165L906 147ZM920 97V139L947 151L974 139V97L947 112Z"/>`)}
        ${tile(1113, svg`<g transform="translate(1068 75)">${edge('t')}</g>`, true)}
        ${tile(1277, svg`<defs><linearGradient id="st" x2=".7" y2="1"><stop stop-color="#0a6fb8"/><stop offset="1" stop-color="#23375c"/></linearGradient></defs><path d="M1256 92V81H1298V92" stroke="#2fb9ee" stroke-width="5"/><path fill="url(#st)" d="M1233 90H1320V157Q1320 165 1312 165H1241Q1233 165 1233 157Z"/><path fill="#f25022" d="M1260 111H1275V126H1260Z"/><path fill="#7fba00" d="M1278 111H1293V126H1278Z"/><path fill="#00a4ef" d="M1260 129H1275V144H1260Z"/><path fill="#ffb900" d="M1278 129H1293V144H1278Z"/>`)}
        ${tile(1442, svg`<defs><linearGradient id="gt" x2="0" y2="1"><stop stop-color="#fda93f"/><stop offset="1" stop-color="#fb8a1e"/></linearGradient></defs><circle cx="1442" cy="120" r="39" fill="url(#gt)" stroke="#e8e3d2" stroke-width="4"/>${star(1442, 120, 0.72, '#fff')}`, true)}
      </div>
      <div class="tray">
        <div class="ico">${ic(94, 100, 52, 38, svg`<path d="M97 131L120 108L143 131" stroke="#1c1f1c" stroke-width="4"/>`)}</div>
        <div class="ico">${ic(178, 94, 64, 46, svg`<path fill="#e9ebe4" stroke="#26282a" stroke-width="3.500" d="M193 135C178 135 177 113 193 112C196 94 221 94 226 108C241 108 243 135 228 135Z"/><path fill="#9b9c98" d="M194 114C197 97 220 97 225 110L202 125C190 122 186 118 194 114Z"/>`)}</div>
        <div class="ico mic">${ic(292, 88, 46, 62, svg`<rect x="305" y="91" width="19" height="38" rx="9.500" stroke="#2058a0" stroke-width="4.500"/><path d="M295 118C295 145 334 145 334 118M314.500 138V150" stroke="#2058a0" stroke-width="4.500"/>`)}</div>
        <div class="lang">ENG<br>IN</div>
        <div class="ico">${ic(568, 94, 64, 46, svg`<circle cx="600" cy="134" r="5" fill="#1c1f1c"/><path d="M571 111C588 93 612 93 629 111M578 120C591 106 609 106 622 120M586 128C594 119 606 119 614 128" stroke="#1c1f1c" stroke-width="3.500"/>`)}</div>
        <div class="ico">${ic(658, 92, 64, 56, svg`<path d="M661 111H671L685 98V142L671 129H661ZM692 110C697 116 697 124 692 130M699 103C708 113 708 127 699 137M707 97C721 111 721 129 707 143" stroke="#1c1f1c" stroke-width="3.200"/>`)}</div>
        <div class="ico">${ic(749, 98, 62, 44, svg`<rect x="752" y="103" width="48" height="34" rx="6" stroke="#1c1f1c" stroke-width="3.500"/><path fill="#1c1f1c" d="M759 110H786V130H759ZM802 113H807Q810 113 810 120T807 127H802Z"/>`)}</div>
        <div class="when">08:03<br>24-08-2022</div>
        <div class="note">8</div>
      </div>
    </footer>`;
  }

  render() {
    return html`<div class="page">
      ${this.header()}
      <div class="body"><div class="inner">
        <div class="people">
          <div class="grid">${ROWS.map((r, y) => r.map((n, x) => html`<div class="cell ${y === 0 && x === 1 ? 'on' : ''}"><div class="av">${n}</div></div>`))}</div>
          <div class="scroll"><div class="thumb"></div></div>
        </div>
        <div class="split"><div class="grip"></div></div>
        <div class="stage">${this.backdrop()}${this.paint()}</div>
      </div></div>
      <div class="base"></div>
      ${this.taskbar()}
    </div>`;
  }
}
